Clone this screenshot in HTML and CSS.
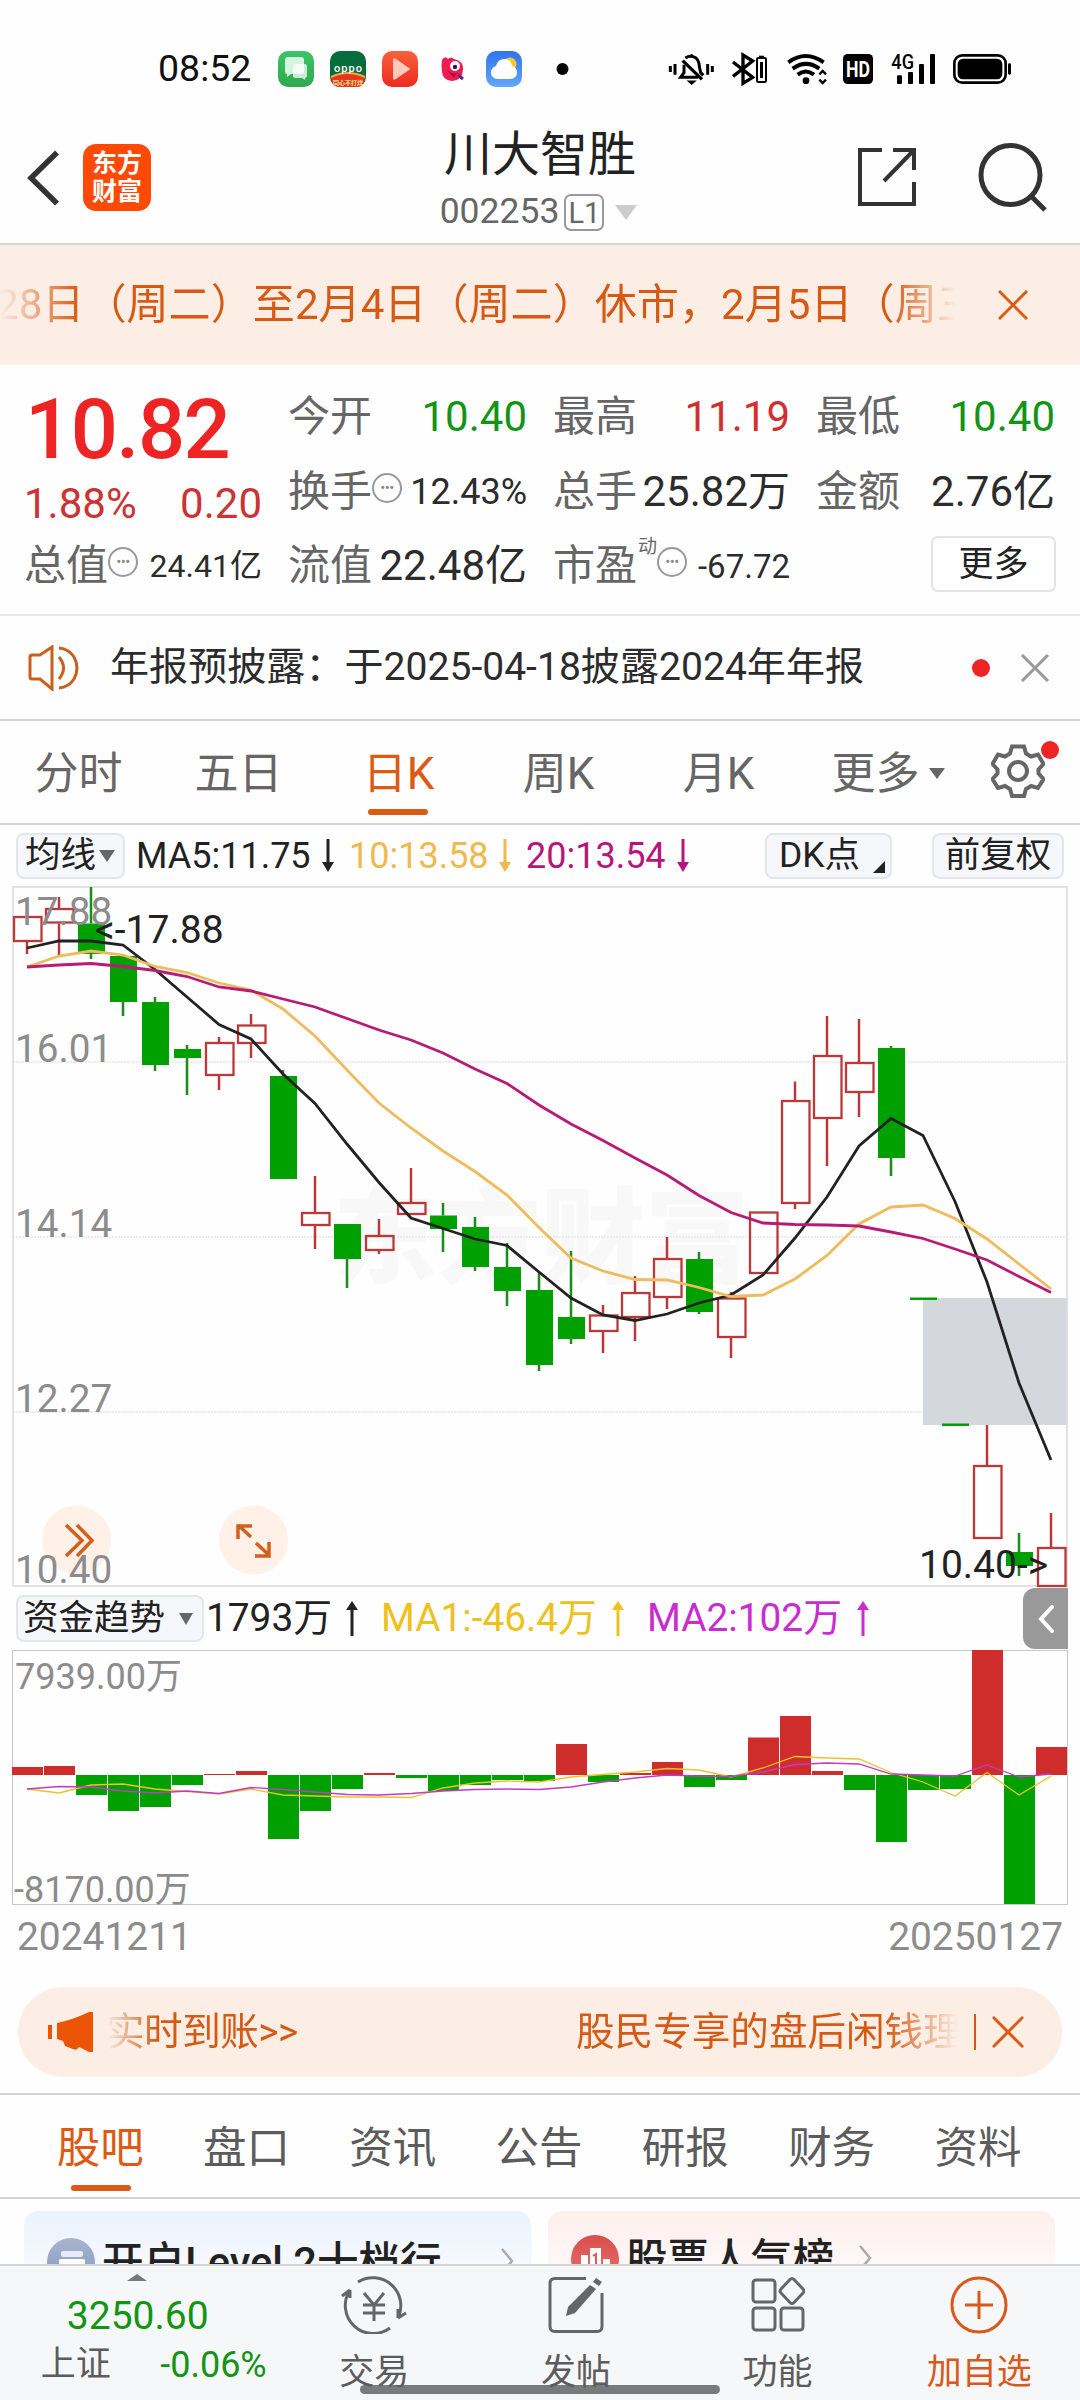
FILE: index.html
```html
<!DOCTYPE html>
<html lang="zh-CN">
<head>
<meta charset="utf-8">
<title>川大智胜 002253</title>
<link rel="stylesheet" href="styles.css">
</head>
<body>
<div class="screen">

<div class="status">
  <span class="clock">08:52</span>
  <svg class="apps" width="300" height="40" viewBox="276 49 300 40">
    <defs>
      <linearGradient id="g1" x1="0" y1="0" x2="0" y2="1"><stop offset="0" stop-color="#3cc46a"/><stop offset="1" stop-color="#2fa84e"/></linearGradient>
      <linearGradient id="g2" x1="0" y1="0" x2="0" y2="1"><stop offset="0" stop-color="#f8613a"/><stop offset="1" stop-color="#ef2a22"/></linearGradient>
      <linearGradient id="g3" x1="0" y1="0" x2="0" y2="1"><stop offset="0" stop-color="#2f74f0"/><stop offset="1" stop-color="#62a8fb"/></linearGradient>
    </defs>
    <rect x="278" y="51" width="36" height="36" rx="10" fill="url(#g1)"/>
    <path d="M285 60q0-3 3-3h13q3 0 3 3v11q0 3-3 3h-10l-4 3v-3q-2 0-2-3z" fill="#d8f3e0"/>
    <path d="M293 66q0-2 2-2h10q2 0 2 2v10q0 2-2 2v2l-3-2h-7q-2 0-2-2z" fill="#fff" opacity=".75"/>
    <rect x="330" y="51" width="36" height="36" rx="10" fill="#076c3c"/>
    <path d="M331 77q17-8 34 0q0 10-9 10h-16q-9 0-9-10z" fill="#e5371c"/>
    <path d="M331 77q17-8 34 0" stroke="#f5a53c" stroke-width="2" fill="none"/>
    <text x="348" y="72" font-size="11" font-weight="500" fill="#fff" text-anchor="middle" textLength="28">oppo</text>
    <text x="348" y="85" font-size="6" fill="#ffe3a0" text-anchor="middle" font-weight="700">同心不打烊</text>
    <rect x="382" y="51" width="36" height="36" rx="10" fill="url(#g2)"/>
    <path d="M393 60q0-3 3-1l13 9q2 1 0 2l-13 9q-3 2-3-1z" fill="#ffc9bb"/>
    <path d="M442 60q3-5 6-1q3-3 6 0q10 2 9 11q-1 11-11 11q-10-1-10-10q-1-5 0-11z" fill="#ee1c50"/>
    <circle cx="455" cy="66" r="5" fill="#fff"/><circle cx="455" cy="67" r="2.200" fill="#3a1640"/>
    <path d="M447 70q5 5 10 3l-3 5z" fill="#a50c38"/><path d="M458 75l5 4" stroke="#552a88" stroke-width="3"/>
    <rect x="486" y="51" width="36" height="36" rx="10" fill="url(#g3)"/>
    <circle cx="510" cy="64" r="6.500" fill="#fcc92c"/>
    <path d="M498 79q-7 0-7-6.500q0-5 5-6.500q2-7 8-7q7 0 8 7q5 1 5 6.500q0 6.500-7 6.500z" fill="#fff"/>
    <circle cx="562.500" cy="69" r="6" fill="#000"/>
  </svg>
  <svg class="sys" width="360" height="60" viewBox="0 0 1080 180">
    <g fill="none" stroke="#000" stroke-width="10">
      <path d="M31 78v18M45 72v32M143 72v32M157 78v18" stroke-width="9"/>
      <path d="M68 62l58 56" stroke-width="10"/><path d="M76 54q16-10 32 0q10 10 10 26l4 18l8 8M72 74v24l-10 14h52" stroke-width="9"/>
      <path d="M95 42v10M86 124h18l-9 8z" stroke-width="5" fill="#000"/>
      <path d="M219 66l59 46l-29 18V45l29 18l-59 46"/>
      <rect x="291" y="54" width="27" height="72" rx="4" stroke-width="6"/><path d="M304.500 66v48" stroke-width="9"/><path d="M297 50h15" stroke-width="6"/>
      <path d="M385 67q52-38 106 0" stroke-width="12"/><path d="M398 86q40-29 80 0" stroke-width="12"/><path d="M413 104q24-19 49 0" stroke-width="12"/>
      <path d="M478 103l10-10l10 10M478 119l10 10l10-10" stroke-width="7"/>
    </g>
    <circle cx="438" cy="122" r="10"/>
    <rect x="549" y="42" width="90" height="90" rx="14"/>
    <text x="594" y="110" fill="#fff" font-size="64" font-weight="700" text-anchor="middle" textLength="72" lengthAdjust="spacingAndGlyphs">HD</text>
    <text x="694" y="87" font-size="60" font-weight="500" textLength="68" lengthAdjust="spacingAndGlyphs">4G</text>
    <rect x="711" y="106" width="15" height="26" rx="3"/><rect x="744" y="96" width="15" height="36" rx="3"/><rect x="777" y="72" width="15" height="60" rx="3"/><rect x="810" y="42" width="15" height="90" rx="3"/>
    <rect x="883" y="46" width="154" height="82" rx="24" fill="none" stroke="#000" stroke-width="8"/><rect x="893" y="56" width="134" height="62" rx="16"/><rect x="1044" y="70" width="9" height="34" rx="4"/>
  </svg>
</div>

<header class="head">
  <svg class="back" width="34" height="56" viewBox="0 0 34 56"><path d="M32 2.500L6 28L32 53.500" fill="none" stroke="#333" stroke-width="5.500"/></svg>
  <div class="logo"><span>东方</span><span>财富</span></div>
  <div class="title">
    <div class="name">川大智胜</div>
    <div class="code"><span>002253</span><b>L1</b><i class="tri"></i></div>
  </div>
  <svg class="share" width="58" height="60" viewBox="0 0 58 60" fill="none" stroke="#333" stroke-width="4"><path d="M24 3H2V57H56V35M35 3H56V23M55 4L26 34"/></svg>
  <svg class="search" width="70" height="70" viewBox="0 0 70 70" fill="none" stroke="#333" stroke-width="5"><circle cx="32.500" cy="32" r="29.500"/><path d="M53 53L67 67"/></svg>
</header>

<div class="notice">
  <div class="marquee"><span>28日（周二）至2月4日（周二）休市，2月5日（周三</span></div>
  <svg width="30" height="30" viewBox="0 0 30 30"><path d="M1 1L29 29M29 1L1 29" stroke="#dd5a12" stroke-width="3"/></svg>
</div>

<section class="quote">
  <div class="main">
    <div class="price">10.82</div>
    <div class="chg"><span>1.88%</span><span>0.20</span></div>
  </div>
  <div class="cell c2"><span>今开</span><em class="g">10.40</em></div>
  <div class="cell c3"><span>最高</span><em class="r">11.19</em></div>
  <div class="cell c4"><span>最低</span><em class="g">10.40</em></div>
  <div class="cell c2"><span>换手</span><i class="dots">•••</i><em class="s36">12.43%</em></div>
  <div class="cell c3"><span>总手</span><em>25.82万</em></div>
  <div class="cell c4"><span>金额</span><em>2.76亿</em></div>
  <div class="cell"><span>总值</span><i class="dots">•••</i><em class="s32">24.41亿</em></div>
  <div class="cell"><span>流值</span><em>22.48亿</em></div>
  <div class="cell"><span>市盈</span><sup>动</sup><i class="dots">•••</i><em class="s33">-67.72</em></div>
  <div class="cell end"><button class="more">更多</button></div>
</section>

<div class="news">
  <svg width="54" height="46" viewBox="0 0 54 46" fill="none" stroke="#c8601e" stroke-width="3"><path d="M2 12q0-2 2-2h8L24 2v42L12 34H4q-2 0-2-2z"/><path d="M31 12q9 11 0 22M31 3q10 1 15 9q6 11 0 22q-5 8-15 9"/></svg>
  <span class="txt">年报预披露：于2025-04-18披露2024年年报</span>
  <i class="dot"></i>
  <svg width="28" height="28" viewBox="0 0 28 28"><path d="M1 1L27 27M27 1L1 27" stroke="#999" stroke-width="3"/></svg>
</div>

<nav class="ktabs">
  <span>分时</span><span>五日</span><span class="on">日K</span><span>周K</span><span>月K</span><span class="m">更多<i class="tri"></i></span>
  <div class="gear"><svg width="54" height="54" viewBox="0 0 54 54" fill="none" stroke="#666" stroke-width="4"><path d="M21 2.500h12l2 7l5 3l7-2l5.500 9.500l-5 5.500v4l5 5.500L47 44l-7-2l-5 3l-2 7H21l-2-7l-5-3l-7 2L1.500 35l5-5.500v-4l-5-5.500L7 10.500l7 2l5-3z"/><circle cx="27" cy="27" r="9"/></svg><i class="dot"></i></div>
</nav>

<div class="mabar">
  <div class="chip a">均线<i class="tri"></i></div>
  <span class="m5">MA5:11.75</span><svg class="ar" width="12" height="34" viewBox="0 0 12 34"><path d="M6 0v26" stroke="#222" stroke-width="3"/><path d="M0 23h12L6 33z" fill="#222"/></svg>
  <span class="m10">10:13.58</span><svg class="ar" width="12" height="34" viewBox="0 0 12 34"><path d="M6 0v26" stroke="#efb94e" stroke-width="3"/><path d="M0 23h12L6 33z" fill="#efb94e"/></svg>
  <span class="m20">20:13.54</span><svg class="ar" width="12" height="34" viewBox="0 0 12 34"><path d="M6 0v26" stroke="#b8157c" stroke-width="3"/><path d="M0 23h12L6 33z" fill="#b8157c"/></svg>
  <div class="chip dk">DK点<i class="corner"></i></div>
  <div class="chip fq">前复权</div>
</div>

<svg class="kchart" id="kchart" width="1080" height="702" viewBox="0 886 1080 702"></svg>

<div class="fundbar">
  <div class="chip f">资金趋势<i class="tri"></i></div>
  <span class="f1">1793万</span><svg class="ar" width="12" height="35" viewBox="0 0 12 35"><path d="M6 7v28" stroke="#222" stroke-width="3"/><path d="M0 9h12L6 0z" fill="#222"/></svg>
  <span class="f2">MA1:-46.4万</span><svg class="ar" width="12" height="35" viewBox="0 0 12 35"><path d="M6 7v28" stroke="#efc11d" stroke-width="3"/><path d="M0 9h12L6 0z" fill="#efc11d"/></svg>
  <span class="f3">MA2:102万</span><svg class="ar" width="12" height="35" viewBox="0 0 12 35"><path d="M6 7v28" stroke="#c92ccf" stroke-width="3"/><path d="M0 9h12L6 0z" fill="#c92ccf"/></svg>
  <div class="side"><svg width="18" height="28" viewBox="0 0 18 28"><path d="M15 2L4 14L15 26" fill="none" stroke="#fff" stroke-width="4" stroke-linecap="round"/></svg></div>
</div>

<svg class="vchart" id="vchart" width="1080" height="256" viewBox="0 1650 1080 256"></svg>

<div class="dates"><span>20241211</span><span>20250127</span></div>

<div class="promo">
  <svg width="46" height="40" viewBox="0 0 46 40" fill="#ea5404"><path d="M0 13h4v14H0zM9 11Q24 8 41 0h4v40h-4L31 35q-2 4-6 2l-8-3l-2-5l-6-2z"/></svg>
  <div class="roll"><span>实时到账&gt;&gt;</span><span>股民专享的盘后闲钱理</span></div>
  <i class="sep"></i>
  <svg width="32" height="32" viewBox="0 0 32 32"><path d="M1 1L31 31M31 1L1 31" stroke="#dd5a12" stroke-width="3"/></svg>
</div>

<nav class="btabs"><span class="on">股吧</span><span>盘口</span><span>资讯</span><span>公告</span><span>研报</span><span>财务</span><span>资料</span></nav>

<div class="cards">
  <div class="card blue">
    <svg width="48" height="48" viewBox="0 0 48 48"><defs><linearGradient id="cb" x1="0" y1="0" x2="0" y2="1"><stop offset="0" stop-color="#a8b5cf"/><stop offset="1" stop-color="#8496bd"/></linearGradient></defs><circle cx="24" cy="24" r="24" fill="url(#cb)"/><rect x="14" y="13" width="22" height="6" rx="2" fill="#e6ebf5"/><rect x="12" y="21" width="26" height="16" rx="2" fill="#fff"/></svg>
    <span>开户Level 2十档行</span>
    <svg class="chev" width="14" height="26" viewBox="0 0 14 26"><path d="M2 1L12 13L2 25" fill="none" stroke="#aaa" stroke-width="2.500"/></svg>
  </div>
  <div class="card pink">
    <svg width="48" height="48" viewBox="0 0 48 48"><defs><linearGradient id="cr" x1="0" y1="0" x2="0" y2="1"><stop offset="0" stop-color="#d94f4c"/><stop offset="1" stop-color="#e8726c"/></linearGradient></defs><circle cx="24" cy="24" r="24" fill="url(#cr)"/><path d="M10 36V20h7v16zM19 36V13h11v23zM32 36V24h7v12z" fill="#fff"/><path d="M22 21l3-2v10" stroke="#dd5a56" stroke-width="2" fill="none"/></svg>
    <span>股票人气榜</span>
    <svg class="chev" width="14" height="26" viewBox="0 0 14 26"><path d="M2 1L12 13L2 25" fill="none" stroke="#aaa" stroke-width="2.500"/></svg>
  </div>
</div>

<footer class="foot">
  <div class="index">
    <i class="up"></i>
    <div class="pt">3250.60</div>
    <div class="row"><span>上证</span><em>-0.06%</em></div>
  </div>
  <div class="act t1"><svg width="66" height="58" viewBox="0 0 66 58" fill="none" stroke="#666" stroke-width="3"><path d="M17 6A28 28 0 0 1 57 42M49 52A28 28 0 0 1 9 14M9 14L1 20M9 14v8M57 42l8-5M57 42v-9"/><path d="M23 17l10 12l10-12M33 29v16M22 29h22M22 37h22"/></svg><span>交易</span></div>
  <div class="act t2"><svg width="56" height="58" viewBox="0 0 56 58" fill="none" stroke="#666" stroke-width="3"><path d="M38 2.500H7q-5 0-5 5v43q0 5 5 5h42q5 0 5-5V17"/><path d="M42 9l6 4L27 37l-9 3l2-9z" fill="#666" stroke="none"/><path d="M45 6l3-4l6 4l-3 4z" fill="#666" stroke="none"/></svg><span>发帖</span></div>
  <div class="act t3"><svg width="54" height="56" viewBox="0 0 54 56" fill="none" stroke="#666" stroke-width="3"><rect x="2" y="3" width="22" height="22" rx="3"/><rect x="2" y="31" width="22" height="22" rx="3"/><rect x="30" y="31" width="22" height="22" rx="3"/><path d="M39 2.500q2-2 4 0l9 9.500q2 2 0 4l-9 9.500q-2 2-4 0l-9-9.500q-2-2 0-4z"/></svg><span>功能</span></div>
  <div class="act t4"><svg width="58" height="58" viewBox="0 0 58 58" fill="none" stroke="#d8591a" stroke-width="3"><circle cx="29" cy="29" r="27"/><path d="M29 15v28M15 29h28"/></svg><span>加自选</span></div>
  <i class="home"></i>
</footer>

</div>
<script src="chart.js"></script>
</body>
</html>
```
FILE: styles.css
```css
* { box-sizing: border-box; }
body { margin: 0; background: #fff; }
body, button { font-family: Roboto, "Noto Sans CJK SC", sans-serif; }
i, em { font-style: normal; }
svg { display: block; flex: none; }
.screen { width: 1080px; height: 2400px; overflow: hidden; background: #fefefe; color: #222; line-height: 1; display: flex; flex-direction: column; white-space: nowrap; font-weight: 400; }
.screen > * { flex: none; }
.tri { width: 0; height: 0; border-style: solid; border-color: #666 transparent transparent; }

.status { height: 110px; display: flex; align-items: flex-start; }
.clock { margin: 50px 0 0 158px; width: 118px; font-size: 37.500px; color: #111; }
.apps { margin-top: 49px; }
.sys { margin: 40px 0 0 84px; }

.head { height: 135px; display: flex; border-bottom: 2px solid #d6d6d6; }
.back { margin: 40px 0 0 25px; }
.logo { margin: 34px 0 0 24px; width: 68px; height: 67px; border-radius: 13px; background: #ff4a05; color: #fff; font-size: 25px; font-weight: 700; display: flex; flex-direction: column; align-items: center; justify-content: center; gap: 3px; }
.title { width: 500px; margin-left: 139px; display: flex; flex-direction: column; align-items: center; }
.name { margin-top: 21px; font-size: 48px; }
.code { margin: 14px 3px 0 0; height: 38px; display: flex; align-items: center; font-size: 35.500px; color: #666; }
.code b { margin-left: 5px; width: 40px; height: 37px; border: 2px solid #999; border-radius: 7px; font-weight: 400; font-size: 29px; line-height: 34px; text-align: center; }
.code .tri { margin-left: 11px; border-width: 15px 11px 0; border-top-color: #ccc; }
.share { margin: 37px 0 0 68px; }
.search { margin: 33px 0 0 62px; }

.notice { height: 120px; background: #fceee5; display: flex; align-items: center; color: #d65a14; }
.marquee { width: 956px; overflow: hidden; font-size: 42.100px; -webkit-mask-image: linear-gradient(90deg, transparent 0, #000 80px, #000 890px, transparent 956px); mask-image: linear-gradient(90deg, transparent 0, #000 80px, #000 890px, transparent 956px); }
.marquee span { display: block; margin-left: -5px; line-height: 60px; }
.notice svg { margin-left: 42px; }

.quote { height: 251px; padding: 16px 24px 0 24px; display: grid; grid-template-columns: 238px 239px 237px 239px; column-gap: 26px; grid-template-rows: 74.500px 74.500px 75px; border-bottom: 2px solid #e9e9e9; }
.main { grid-row: 1 / 3; }
.price { margin: 9px 0 0 1px; font-size: 83px; font-weight: 500; color: #ee2424; letter-spacing: -1.500px; line-height: 80px; }
.chg { margin-top: 13px; display: flex; justify-content: space-between; font-size: 42px; color: #cb3434; }
.cell { display: flex; align-items: center; color: #666; font-size: 42px; height: 72px; }
.cell em { margin-left: auto; color: #2c2c2c; }
.cell em.g { color: #149414; }
.cell em.r { color: #d22f2f; }
.cell .s36 { font-size: 36px; }
.cell .s33 { font-size: 33px; }
.cell .s32 { font-size: 32px; }
.cell sup { font-size: 19px; align-self: flex-start; margin: 7px 0 0 1px; line-height: 1; }
.dots { width: 30px; height: 30px; border: 2px solid #999; border-radius: 50%; font-size: 15px; letter-spacing: -.5px; line-height: 26px; text-align: center; color: #888; margin: -8px 0 0 0; }
.end { justify-content: flex-end; }
.more { width: 125px; height: 56px; border: 2px solid #e4e4e4; border-radius: 7px; background: #fff; font-size: 35px; font-weight: 400; color: #222; padding: 0; line-height: 1; margin: -4px -1px 0 0; }

.news { height: 105px; display: flex; align-items: center; border-bottom: 2px solid #d4d4d4; font-size: 39.100px; color: #2c2c2c; padding-left: 28px; }
.news .txt { margin-left: 28px; width: 862px; }
.dot { width: 18px; height: 18px; border-radius: 50%; background: #ee2424; }
.news .dot { margin-right: 31px; }

.ktabs { height: 104px; display: flex; border-bottom: 2px solid #d4d4d4; font-size: 44px; color: #666; }
.ktabs span { flex: none; width: 160px; height: 106px; line-height: 106px; padding-right: 3px; display: flex; justify-content: center; align-items: center; position: relative; }
.ktabs .on { color: #dd5a12; }
.ktabs .on::after { content: ""; position: absolute; left: 48px; bottom: 12px; width: 60px; height: 6px; border-radius: 3px; background: #dd5a12; }
.ktabs .m { padding-left: 19px; }
.ktabs .tri { margin: -2px 0 0 9px; border-width: 11px 8px 0; }
.gear { position: relative; margin: 23px 0 0 31px; width: 54px; height: 54px; }
.gear .dot { position: absolute; right: -14px; top: -3px; }

.mabar { height: 61px; display: flex; align-items: center; font-size: 36px; padding-left: 16px; }
.mabar > *, .fundbar > * { flex: none; }
.chip { height: 46px; border: 2px solid #e3e6ea; border-radius: 8px; background: #f6f7fa; font-size: 35.500px; display: flex; align-items: center; color: #222; }
.chip.a { width: 109px; padding-left: 7px; }
.chip.a .tri { margin-left: 3px; border-width: 12px 8px 0; }
.m5 { margin-left: 11px; width: 186px; }
.m10 { margin-left: 15px; width: 150px; color: #efb94e; }
.m20 { margin-left: 15px; width: 151px; color: #b8157c; }
.chip.dk { margin-left: 76px; width: 127px; padding-left: 12px; position: relative; }
.corner { position: absolute; right: 5px; bottom: 4px; width: 0; height: 0; border-style: solid; border-width: 0 0 12px 12px; border-color: transparent transparent #222; }
.chip.fq { margin-left: 40px; width: 132px; justify-content: center; }

.fundbar { height: 62px; display: flex; align-items: center; font-size: 38.800px; padding-left: 16px; padding-bottom: 1px; }
.chip.f { width: 188px; padding-left: 5px; height: 47px; }
.chip.f .tri { margin-left: 14px; border-width: 12px 7px 0; }
.f1 { margin-left: 2px; width: 140px; }
.f2 { margin-left: 23px; width: 231px; color: #efc11d; }
.f3 { margin-left: 23px; width: 210px; color: #c92ccf; }
.side { margin-left: 154px; width: 45px; height: 61px; border-radius: 12px 0 0 12px; background: #999; display: flex; align-items: center; justify-content: center; }

text { font-family: Roboto, "Noto Sans CJK SC", sans-serif; }
.axis { font-size: 38.700px; fill: #8c8c8c; }
.vaxis { font-size: 36px; fill: #8c8c8c; }
.mark { font-size: 39px; fill: #222; }
.water { font-size: 104px; font-weight: 900; fill: #f8f8f8; }

.dates { height: 81px; padding: 12px 17px 0 17px; display: flex; justify-content: space-between; font-size: 38.900px; color: #8c8c8c; }

.promo { margin: 0 18px; height: 90px; border-radius: 45px; background: #fceee5; display: flex; align-items: center; padding-left: 30px; color: #d65a14; font-size: 38.600px; }
.roll { margin-left: 12px; width: 852px; overflow: hidden; display: flex; line-height: 60px; -webkit-mask-image: linear-gradient(90deg, transparent 0, #000 50px, #000 780px, transparent 852px); mask-image: linear-gradient(90deg, transparent 0, #000 50px, #000 780px, transparent 852px); }
.roll span { flex: none; }
.roll span:first-child { width: 470px; letter-spacing: -.5px; }
.sep { width: 2px; height: 36px; background: #d65a14; margin: 0 16px; }

.btabs { margin-top: 16px; height: 106px; border-top: 2px solid #d4d4d4; border-bottom: 2px solid #d4d4d4; padding-left: 27px; display: flex; font-size: 43.500px; color: #5c5c5c; }
.btabs span { width: 146.300px; height: 108px; line-height: 108px; text-align: center; position: relative; }
.btabs .on { color: #dd5a12; }
.btabs .on::after { content: ""; position: absolute; left: 44px; bottom: 12px; width: 60px; height: 6px; border-radius: 3px; background: #dd5a12; }

.cards { height: 65px; overflow: hidden; padding: 12px 25px 0 24px; display: flex; gap: 17px; font-size: 41.600px; font-weight: 500; color: #222; }
.card { flex: none; width: 507px; height: 120px; border-radius: 14px; display: flex; align-items: flex-start; padding: 27px 0 0 23px; }
.blue { background: linear-gradient(#ebf3fd, #f1f5fd 30px, #fbfcff 70px); }
.pink { background: linear-gradient(#fdf0ef, #fef3f2 30px, #fffafa 70px); }
.pink { padding-top: 24px; }
.card span { margin: 5px 0 0 7px; line-height: 40px; }
.chev { margin: 10px 17px 0 auto; }
.pink .chev { margin-left: 24px; }

.foot { height: 136px; border-top: 2px solid #d4d4d4; background: #f6f7f9; display: flex; position: relative; }
.index { width: 274px; display: flex; flex-direction: column; align-items: center; color: #149414; }
.up { width: 0; height: 0; border-style: solid; border-width: 0 10px 7px; border-color: transparent transparent #777; margin-top: 8px; }
.pt { margin: 15px 0 0 2px; font-size: 39px; line-height: 40px; }
.row { width: 226px; margin: 11px 0 0 34px; display: flex; justify-content: space-between; align-items: center; font-size: 36px; line-height: 36px; }
.row span { color: #5c5c5c; font-size: 35px; }
.act { width: 202px; display: flex; flex-direction: column; align-items: center; color: #5c5c5c; font-size: 35px; padding-top: 10px; }
.act svg { height: 58px; }
.act span { margin-top: 21px; }
.t4 { color: #d8591a; }
.home { position: absolute; left: 360px; top: 119px; width: 360px; height: 9px; border-radius: 5px; background: rgba(90, 90, 90, .8); }
```
FILE: chart.js
```js
// Candles: [up, bodyTop, bodyBottom, high, low] in panel coordinates
const candles = [
  [1,916,942,916,954],[1,908,923.5,897,956],[0,923.5,954,887,959],[0,956,1002,956,1016],[0,1002,1065,997,1071],
  [0,1049,1058,1045,1095],[1,1042,1076,1037,1090],[1,1024.5,1044,1014,1058],[0,1076,1179,1070,1179],[1,1212,1226,1176,1249],
  [0,1224,1259,1224,1288],[1,1235,1251,1219,1254],[1,1202,1215,1168,1215],[0,1215.5,1229,1203,1252],[0,1227,1267,1217,1271],
  [0,1267,1291,1243,1306],[0,1290,1365,1272,1371],[0,1317,1339,1251,1344],[1,1314.5,1332,1305,1353],[1,1292,1318,1276,1341],
  [1,1258,1298,1237,1309],[0,1259,1312,1252,1314],[1,1297.5,1338,1292,1358],[1,1211.5,1274,1211.5,1274],[1,1100,1204,1081.5,1209],
  [1,1055,1119,1016,1166],[1,1062,1093,1019,1117],[0,1048,1158,1046,1176],[0,1297.5,1300,1297.5,1300],[0,1423.5,1426,1423.5,1426],
  [1,1465,1539,1425,1539],[0,1552,1566,1533,1576],[1,1547,1587,1513,1587]
];
const ma5 = [948,941,941,945,969.5,997,1024.5,1039,1074,1103.5,1144,1182.5,1218,1228.5,1239,1245.5,1272,1298,1315,1320.5,1314,1303,1295,1275,1238,1197,1146,1118.5,1135.5,1201.5,1282,1383,1460];
const ma10 = [967,956,951,955,966.5,972.5,983,990,1009,1036,1070,1103,1128,1151,1171.5,1195,1227.5,1258,1271,1279.5,1280,1287.5,1296.5,1295,1279,1255.5,1224,1207,1205,1218.5,1239,1264,1289];
const ma20 = [967,965,963.5,966.5,970.5,976.5,987,991,999,1007,1018.5,1030,1040,1053,1069,1083.5,1105,1124,1140.5,1158,1175,1195.5,1212.5,1223,1224.5,1225,1226,1232,1238.5,1249,1260,1276.5,1292.5];

// Net capital flow: y of the bar's free end, baseline at 1775
const flow = [1767,1766,1795,1811,1807,1785,1774,1771,1839,1811,1789,1773,1778,1791,1785,1780,1781,1744,1782,1773,1762,1787,1780,1737.5,1716,1771,1790,1842,1790,1789,1650,1904,1747];
const fma1 = [1789,1793,1785,1784,1789,1791.5,1794,1789,1795,1796,1797,1797,1797.5,1788,1783,1781,1782,1777,1774.5,1772,1768.5,1770,1777,1768,1756.5,1758,1759,1772.5,1782,1796,1772.5,1795,1776];
const fma2 = [1789,1786.5,1787,1791,1793,1791,1793.5,1787.5,1789.5,1792,1794.5,1795,1793.5,1791,1789.5,1789,1789.5,1787,1782,1778,1775,1776,1776.5,1772,1764.5,1763,1764,1774,1775,1776,1765,1777,1774];

const X = i => 27 + 32 * i;
const line = (pts, c, w) => `<polyline fill="none" stroke="${c}" stroke-width="${w}" points="${pts.map((y, i) => X(i) + ',' + y).join(' ')}"/>`;

let k = '<text class="water" x="333" y="1275">东方财富</text>';
for (const y of [1062, 1237, 1412]) k += `<path d="M13 ${y}H1067" stroke="#e6e6e6" stroke-width="1.500" stroke-dasharray="2 1"/>`;
k += '<rect x="13" y="887" width="1054" height="699" fill="none" stroke="#e2e2e2" stroke-width="2"/>';
k += '<rect x="923" y="1298" width="144" height="127" fill="#d4d7dc"/>';
candles.forEach(([up, t, b, h, l], i) => {
  const x = X(i), c = up ? '#b93a38' : '#00a000';
  if (h < t) k += `<path d="M${x} ${h}V${t}" stroke="${up ? c : '#178e17'}" stroke-width="2.5"/>`;
  if (l > b) k += `<path d="M${x} ${b}V${l}" stroke="${up ? c : '#178e17'}" stroke-width="2.5"/>`;
  k += up
    ? `<rect x="${x - 13}" y="${t + 1}" width="27.5" height="${b - t - 2}" fill="none" stroke="${c}" stroke-width="2.3"/>`
    : `<rect x="${x - 13}" y="${t}" width="27" height="${b - t}" fill="${c}"/>`;
});
k += line(ma5, '#222', 2.8) + line(ma10, '#eebc5c', 2.8) + line(ma20, '#b81b76', 2.8);
k += '<g fill="#fff0e8"><circle cx="76.500" cy="1540" r="34.500"/><circle cx="253.500" cy="1540" r="34.500"/></g>';
k += '<g fill="none" stroke="#d2601c" stroke-width="3.500"><path d="M66 1525l16 15.500l-16 15.500M77 1525l15 15.500l-15 15.500M251 1537l-13-12M238 1539v-13h14M256 1543l13 12M255 1556h14v-14"/></g>';
[['17.88', 925], ['16.01', 1062], ['14.14', 1237], ['12.27', 1412], ['10.40', 1583]].forEach(([s, y]) => { k += `<text class="axis" x="15" y="${y}">${s}</text>`; });
k += '<text class="mark" x="95" y="942.500">&lt;-17.88</text><text class="mark" x="919" y="1578">10.40-&gt;</text>';
document.getElementById('kchart').innerHTML = k;

let v = '<rect x="12.500" y="1650.500" width="1055" height="254" fill="none" stroke="#c8c8c8"/>';
flow.forEach((y, i) => {
  v += `<rect x="${12 + 32 * i}" y="${Math.min(y, 1775)}" width="31" height="${Math.abs(y - 1775)}" fill="${y < 1775 ? '#cf2d2c' : '#00a000'}"/>`;
});
v += line(fma1, '#ecc22c', 1.3) + line(fma2, '#c03cc4', 1.3);
v += '<text class="vaxis" x="15" y="1688.500">7939.00万</text><text class="vaxis" x="14" y="1901.500">-8170.00万</text>';
document.getElementById('vchart').innerHTML = v;
```
